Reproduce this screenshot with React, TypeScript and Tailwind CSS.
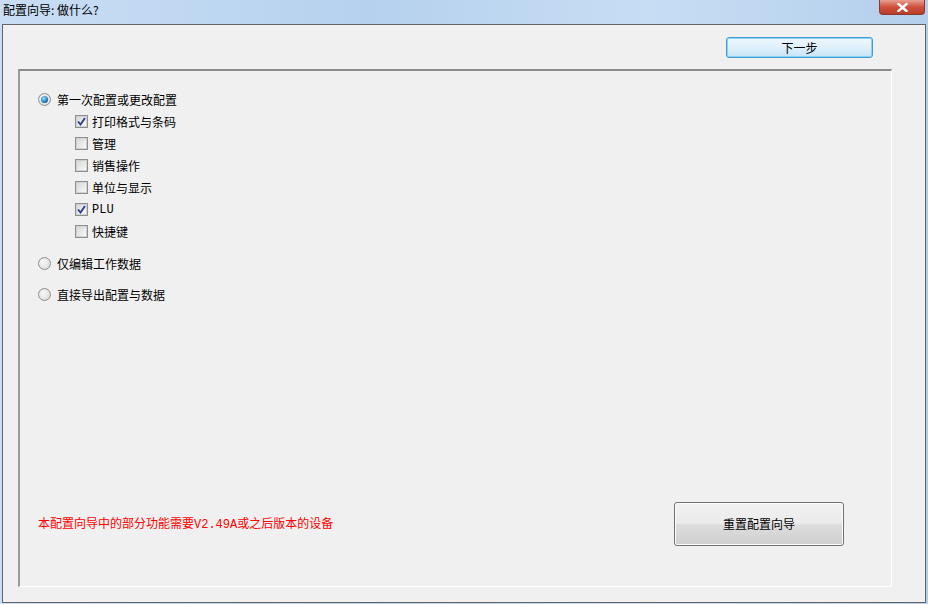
const cjk = '"Noto Sans CJK SC", "Liberation Sans", sans-serif';
const mono = '"Liberation Mono", "Noto Sans CJK SC", monospace';

const Radio = ({ checked }: { checked?: boolean }) => (
  <span className="flex h-[13px] w-[13px] items-center justify-center rounded-full border border-[#8f8f8f] bg-[radial-gradient(circle_at_40%_40%,#f8f8f8,#d4d4d4)]">
    {checked && (
      <span className="h-[7px] w-[7px] rounded-full bg-[radial-gradient(circle_at_40%_35%,#9fe0ff,#1a78b8_60%,#0b3f73)]" />
    )}
  </span>
);

const Check = ({ checked }: { checked?: boolean }) => (
  <span className="flex h-[13px] w-[13px] items-center justify-center border border-[#8e8f8f] bg-white">
    <span className="flex h-[11px] w-[11px] items-center justify-center border border-[#d0d0d0] bg-[linear-gradient(135deg,#d8d8d8,#f8f8f8)]">
      {checked && (
        <svg width="9" height="9" viewBox="0 0 9 9">
          <path d="M1 4.5 L3.5 7.5 L8 1" fill="none" stroke="#2a3d8f" strokeWidth="1.8" />
        </svg>
      )}
    </span>
  </span>
);

const items = [
  { label: '打印格式与条码', checked: true },
  { label: '管理' },
  { label: '销售操作' },
  { label: '单位与显示' },
  { label: 'PLU', checked: true, latin: true },
  { label: '快捷键' },
];

export default function App() {
  return (
    <div
      className="flex h-[604px] w-[928px] flex-col overflow-hidden bg-[linear-gradient(90deg,#c9def5,#b6d1ee_40%,#c7ddf4_70%,#b4cfec)] text-[12px] text-black"
      style={{ fontFamily: cjk }}
    >
      {/* title bar */}
      <div className="flex h-[24px] shrink-0 items-start justify-between">
        <span className="pl-[3px] pt-[1px] leading-[18px]">配置向导: 做什么?</span>
        <div className="mr-[3px] flex h-[15px] w-[46px] items-center justify-center rounded-b-[4px] border border-t-0 border-[#8a3a2f] bg-[linear-gradient(180deg,#e8a093,#d0503d_50%,#b83c28)]">
          <svg width="11" height="9" viewBox="0 0 11 9">
            <path d="M1.5 1 L9.5 8 M9.5 1 L1.5 8" stroke="#ffffff" strokeWidth="2.4" strokeLinecap="square" />
          </svg>
        </div>
      </div>

      {/* client area */}
      <div className="ml-[2px] flex h-[579px] w-[924px] flex-col border border-[#646464] bg-[#f0f0f0]">
        <div className="flex justify-end pr-[52px] pt-[12px]">
          <button className="h-[21px] w-[147px] rounded-[3px] border border-[#3c9fd8] bg-[linear-gradient(180deg,#eef7fd,#dff0fb_50%,#c6e4f7)] text-[12px] shadow-[inset_0_0_0_1px_#8fd0f5]">
            下一步
          </button>
        </div>

        <div className="ml-[15px] mt-[11px] flex h-[518px] w-[874px] flex-col border-b border-l-2 border-r border-t-2 border-b-white border-l-[#9a9a9a] border-r-white border-t-[#8a8a8a]">
          <div className="flex flex-col pl-[18px] pt-[21px]">
            <div className="flex h-[15px] items-center gap-[6px]">
              <Radio checked />
              <span>第一次配置或更改配置</span>
            </div>
            <div className="mt-[7px] flex flex-col gap-[7px] pl-[37px]">
              {items.map((it, key) => (
                <div className="flex h-[15px] items-center gap-[4px]" key={key}>
                  <Check checked={it.checked} />
                  <span style={it.latin ? { fontFamily: mono } : undefined}>{it.label}</span>
                </div>
              ))}
            </div>
            <div className="mt-[17px] flex h-[15px] items-center gap-[6px]">
              <Radio />
              <span>仅编辑工作数据</span>
            </div>
            <div className="mt-[16px] flex h-[15px] items-center gap-[6px]">
              <Radio />
              <span>直接导出配置与数据</span>
            </div>
          </div>

          <div className="flex-1" />

          <div className="mb-[40px] flex items-center justify-between pl-[18px] pr-[47px]">
            <span className="text-[#ff0000]">
              本配置向导中的部分功能需要<span style={{ fontFamily: mono }}>V2.49A</span>或之后版本的设备
            </span>
            <button className="h-[44px] w-[170px] rounded-[3px] border border-[#707070] bg-[linear-gradient(180deg,#f2f2f2,#ebebeb_48%,#dddddd_52%,#cfcfcf)] text-[12px] shadow-[inset_0_0_0_1px_#fcfcfc]">
              重置配置向导
            </button>
          </div>
        </div>
      </div>
    </div>
  );
}
